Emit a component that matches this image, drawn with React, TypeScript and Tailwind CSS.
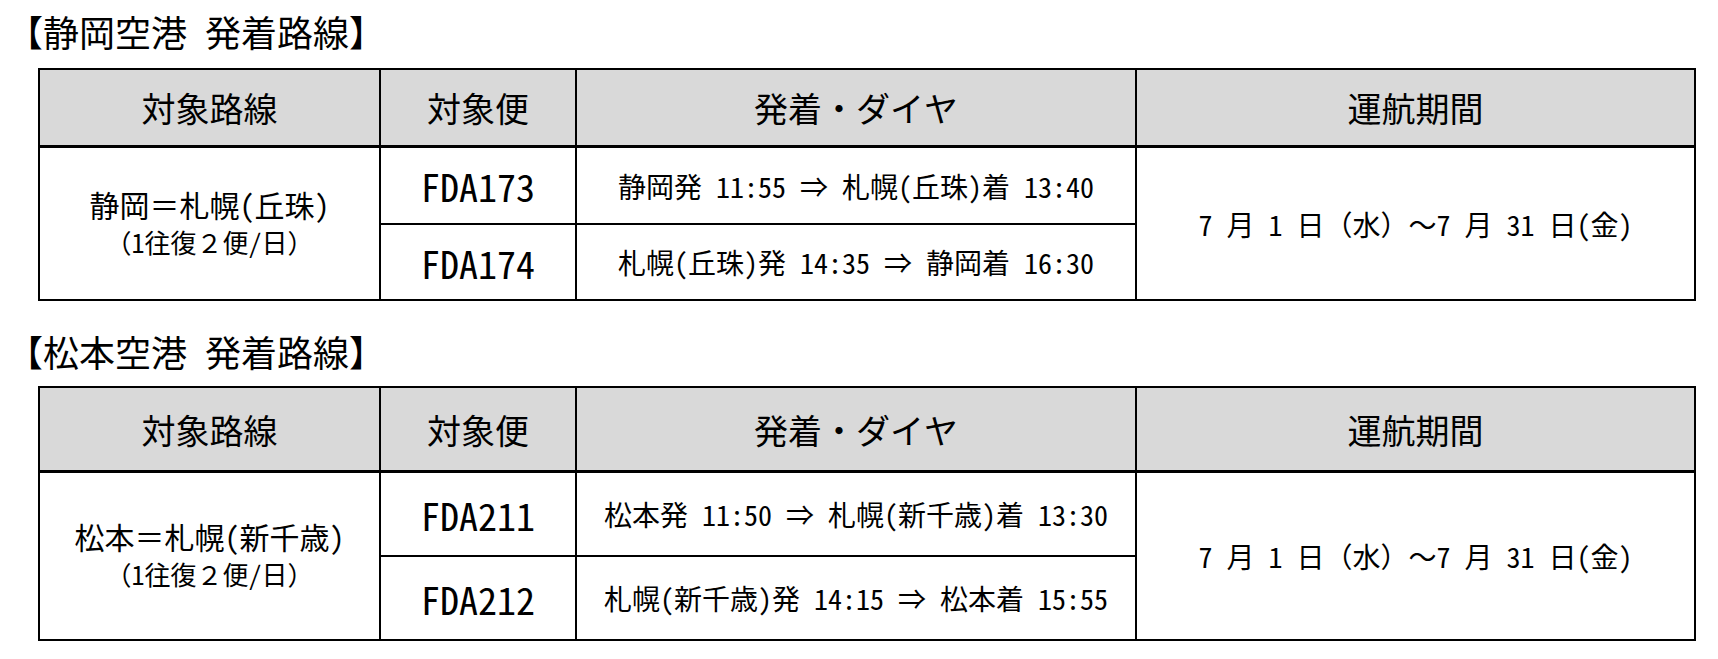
import React from 'react';

interface Flight {
  code: string;
  dia: string;
}

interface RouteTableProps {
  route: string;
  note: string;
  flights: Flight[];
  period: string;
  rows: string;
}

const headers = ['対象路線', '対象便', '発着・ダイヤ', '運航期間'];

function RouteTable({ route, note, flights, period, rows }: RouteTableProps) {
  return (
    <div
      className={`ml-[38px] w-[1658px] border-2 border-black grid grid-cols-[341px_196px_560px_557px] ${rows}`}
    >
      {headers.map((h, i) => (
        <div
          key={h}
          className={`bg-[#d9d9d9] border-b-[3px] border-black flex items-center justify-center text-[34px] ${
            i < 3 ? 'border-r-2' : ''
          }`}
        >
          {h}
        </div>
      ))}

      <div className="row-span-2 border-r-2 border-black flex flex-col items-center justify-center">
        <div className="text-[30px] leading-[36px]">{route}</div>
        <div className="text-[26px] leading-[40px]">{note}</div>
      </div>

      {flights.map((f, i) => (
        <React.Fragment key={f.code}>
          <div
            className={`border-r-2 border-black flex items-center justify-center text-[38px] ${
              i === 0 ? 'border-b-2' : ''
            } col-start-2`}
          >
            {f.code}
          </div>
          <div
            className={`border-r-2 border-black flex items-center justify-center text-[28px] whitespace-pre ${
              i === 0 ? 'border-b-2' : ''
            } col-start-3`}
          >
            {f.dia}
          </div>
          {i === 0 && (
            <div className="row-span-2 col-start-4 row-start-2 flex items-center justify-center text-[28px] whitespace-pre">
              {period}
            </div>
          )}
        </React.Fragment>
      ))}
    </div>
  );
}

export default function App() {
  return (
    <div className="w-[1718px] h-[659px] bg-white text-black font-['Noto_Sans_Mono_CJK_JP','Noto_Sans_CJK_JP',sans-serif] overflow-hidden">
      <div className="pt-[11px]">
        <h2 className="pl-[7px] h-[40px] leading-[40px] text-[36px] mb-[17px]">【静岡空港 発着路線】</h2>
        <RouteTable
          route="静岡＝札幌(丘珠)"
          note="（1往復２便/日）"
          rows="grid-rows-[78px_77px_74px]"
          flights={[
            { code: 'FDA173', dia: '静岡発 11:55 ⇒ 札幌(丘珠)着 13:40' },
            { code: 'FDA174', dia: '札幌(丘珠)発 14:35 ⇒ 静岡着 16:30' },
          ]}
          period="7 月 1 日（水）～7 月 31 日(金)"
        />
      </div>

      <div className="mt-[30px]">
        <h2 className="pl-[7px] h-[40px] leading-[40px] text-[36px] mb-[15px]">【松本空港 発着路線】</h2>
        <RouteTable
          route="松本＝札幌(新千歳)"
          note="（1往復２便/日）"
          rows="grid-rows-[85px_84px_82px]"
          flights={[
            { code: 'FDA211', dia: '松本発 11:50 ⇒ 札幌(新千歳)着 13:30' },
            { code: 'FDA212', dia: '札幌(新千歳)発 14:15 ⇒ 松本着 15:55' },
          ]}
          period="7 月 1 日（水）～7 月 31 日(金)"
        />
      </div>
    </div>
  );
}
